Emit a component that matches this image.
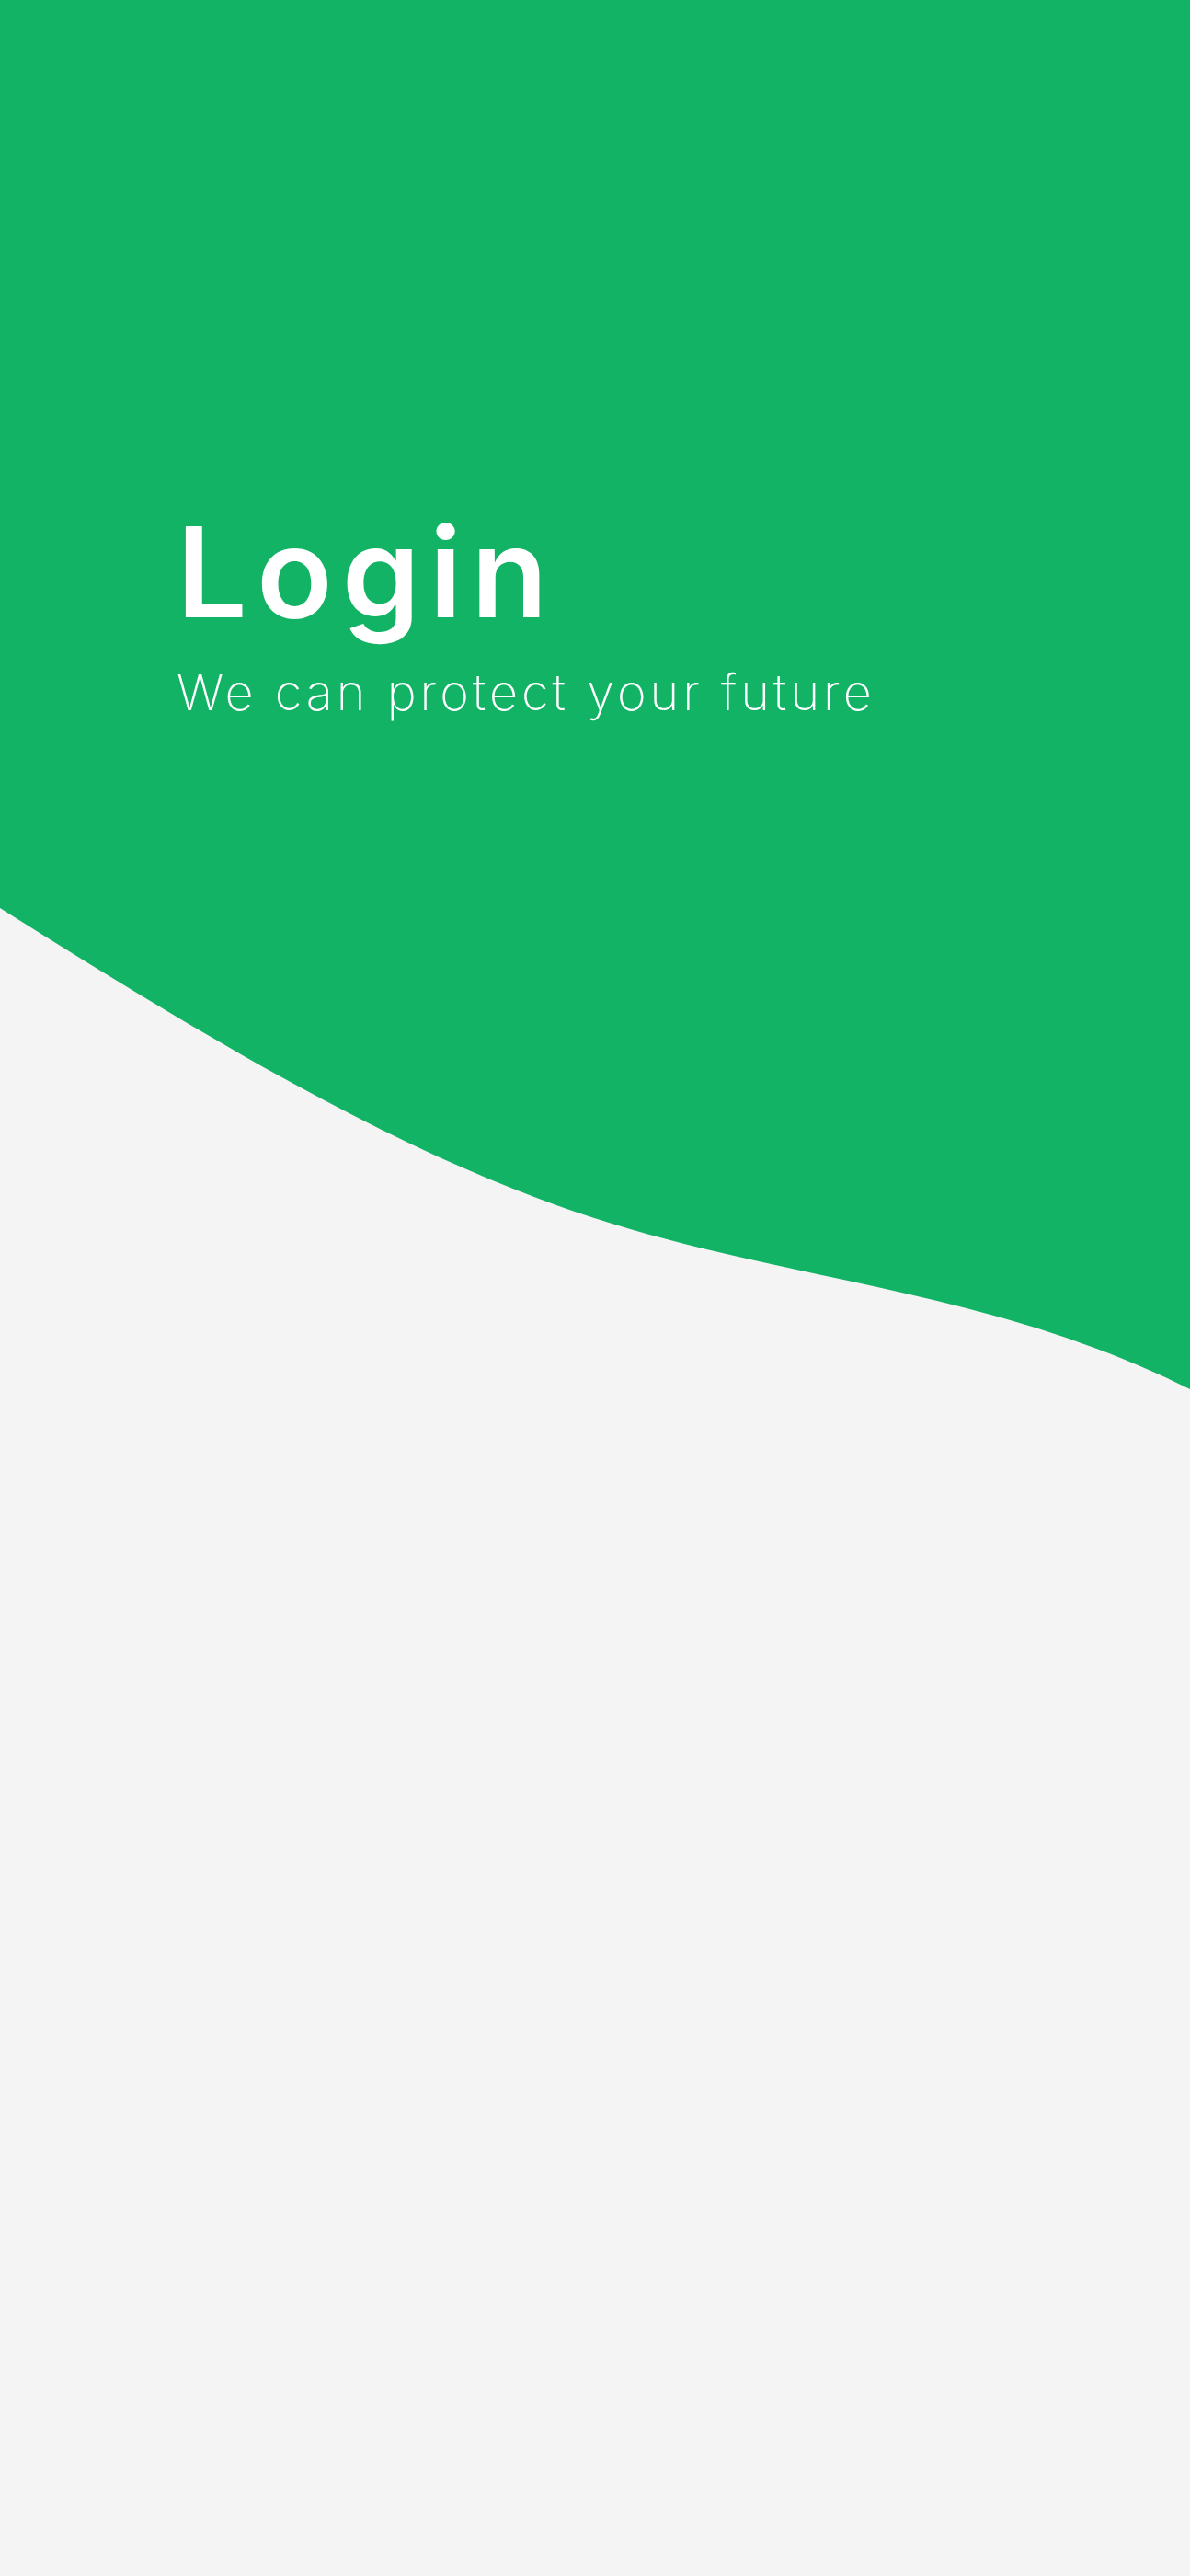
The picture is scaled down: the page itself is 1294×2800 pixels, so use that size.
import React from 'react';

const Wave: React.FC = () => (
  <svg
    viewBox="0 0 1294 524"
    preserveAspectRatio="none"
    className="block w-full h-[524px]"
    aria-hidden="true"
  >
    <path
      d="M0,0 L1294,0 L1294,523 C1064,408 835,406 605,323 C405,251 200,126 0,0 Z"
      fill="#13b366"
    />
  </svg>
);

export default function App() {
  return (
    <div className="min-h-[2800px] bg-[#f4f4f4]" style={{ fontFamily: 'Inter, "Noto Sans", sans-serif' }}>
      <header>
        <div className="h-[987px] bg-[#13b366] pt-[554px] pl-[192px]">
          <h1 className="text-[136px] leading-none font-semibold text-white tracking-[10px]">Login</h1>
          <p className="mt-[36px] text-[54px] leading-none font-extralight text-white tracking-[4px]">
            We can protect your future
          </p>
        </div>
        <Wave />
      </header>
    </div>
  );
}
